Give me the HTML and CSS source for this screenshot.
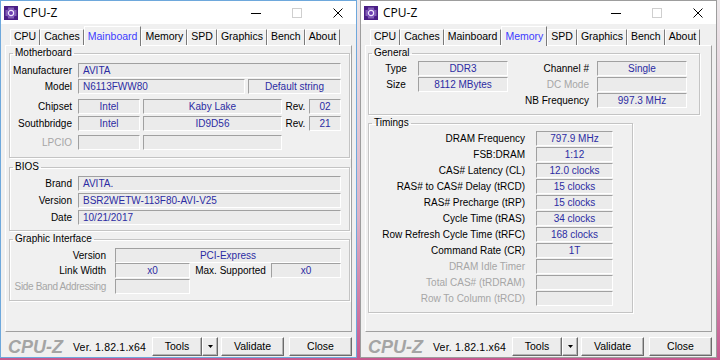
FILE: index.html
```html
<!DOCTYPE html>
<html lang="en">
<head>
  <meta charset="UTF-8" />
  <title>CPU-Z</title>
  <link rel="stylesheet" href="styles.css">
</head>
<body>
<div class="desktop">

  <!-- Mainboard window -->
  <div class="window active">
    <div class="titlebar">
      <svg class="app-icon" width="14" height="14" viewBox="0 0 14 14">
        <rect width="14" height="14" fill="#4a1e86"/>
        <rect x="3" y="3" width="8" height="8" rx="1.5" fill="#6a3bb0"/>
        <circle cx="7" cy="7" r="2.6" fill="none" stroke="#eee6fa" stroke-width="1.2"/>
        <path d="M5 1.5v2M7 1.5v2M9 1.5v2M5 10.5v2M7 10.5v2M9 10.5v2M1.5 5h2M1.5 7h2M1.5 9h2M10.5 5h2M10.5 7h2M10.5 9h2" stroke="#c9b6ec" stroke-width="0.9"/>
      </svg>
      <span class="title">CPU-Z</span>
      <div class="controls">
        <svg class="ctl" width="10" height="10" viewBox="0 0 10 10"><path d="M0 5.5h10" stroke="#000" stroke-width="1"/></svg>
        <svg class="ctl" width="10" height="10" viewBox="0 0 10 10"><rect x="0.5" y="0.5" width="9" height="9" fill="none" stroke="#cfcfcf"/></svg>
        <svg class="ctl" width="10" height="10" viewBox="0 0 10 10"><path d="M0.5 0.5l9 9M9.5 0.5l-9 9" stroke="#000" stroke-width="1"/></svg>
      </div>
    </div>

    <div class="tabs">
      <span class="tab">CPU</span>
      <span class="tab">Caches</span>
      <span class="tab current">Mainboard</span>
      <span class="tab">Memory</span>
      <span class="tab">SPD</span>
      <span class="tab">Graphics</span>
      <span class="tab">Bench</span>
      <span class="tab">About</span>
    </div>

    <div class="panel">
      <fieldset class="group motherboard">
        <legend>Motherboard</legend>
        <div class="row">
          <span class="lbl">Manufacturer</span>
          <span class="box grow">AVITA</span>
        </div>
        <div class="row">
          <span class="lbl">Model</span>
          <span class="box grow">N6113FWW80</span>
          <span class="box c extra">Default string</span>
        </div>
        <div class="row">
          <span class="lbl">Chipset</span>
          <span class="box c vendor">Intel</span>
          <span class="box c chip">Kaby Lake</span>
          <span class="rev">Rev.</span>
          <span class="box c revnum">02</span>
        </div>
        <div class="row">
          <span class="lbl">Southbridge</span>
          <span class="box c vendor">Intel</span>
          <span class="box c chip">ID9D56</span>
          <span class="rev">Rev.</span>
          <span class="box c revnum">21</span>
        </div>
        <div class="row">
          <span class="lbl dim">LPCIO</span>
          <span class="box c vendor"></span>
          <span class="box c chip"></span>
        </div>
      </fieldset>

      <fieldset class="group bios">
        <legend>BIOS</legend>
        <div class="row">
          <span class="lbl">Brand</span>
          <span class="box grow">AVITA.</span>
        </div>
        <div class="row">
          <span class="lbl">Version</span>
          <span class="box grow">BSR2WETW-113F80-AVI-V25</span>
        </div>
        <div class="row">
          <span class="lbl">Date</span>
          <span class="box grow">10/21/2017</span>
        </div>
      </fieldset>

      <fieldset class="group graphic">
        <legend>Graphic Interface</legend>
        <div class="row">
          <span class="lbl">Version</span>
          <span class="box c grow">PCI-Express</span>
        </div>
        <div class="row">
          <span class="lbl">Link Width</span>
          <span class="box c link">x0</span>
          <span class="maxlbl">Max. Supported</span>
          <span class="box c grow">x0</span>
        </div>
        <div class="row">
          <span class="lbl dim tight">Side Band Addressing</span>
          <span class="box c link"></span>
        </div>
      </fieldset>
    </div>

    <div class="footer">
      <span class="logo">CPU-Z</span>
      <span class="ver">Ver. 1.82.1.x64</span>
      <div class="buttons">
        <span class="btn tools">Tools</span>
        <span class="btn arrow"><svg width="5" height="3" viewBox="0 0 5 3"><path d="M0 0h5L2.5 3z" fill="#000"/></svg></span>
        <span class="btn validate">Validate</span>
        <span class="btn close">Close</span>
      </div>
    </div>
  </div>

  <!-- Memory window -->
  <div class="window">
    <div class="titlebar">
      <svg class="app-icon" width="14" height="14" viewBox="0 0 14 14">
        <rect width="14" height="14" fill="#4a1e86"/>
        <rect x="3" y="3" width="8" height="8" rx="1.5" fill="#6a3bb0"/>
        <circle cx="7" cy="7" r="2.6" fill="none" stroke="#eee6fa" stroke-width="1.2"/>
        <path d="M5 1.5v2M7 1.5v2M9 1.5v2M5 10.5v2M7 10.5v2M9 10.5v2M1.5 5h2M1.5 7h2M1.5 9h2M10.5 5h2M10.5 7h2M10.5 9h2" stroke="#c9b6ec" stroke-width="0.9"/>
      </svg>
      <span class="title">CPU-Z</span>
      <div class="controls">
        <svg class="ctl" width="10" height="10" viewBox="0 0 10 10"><path d="M0 5.5h10" stroke="#000" stroke-width="1"/></svg>
        <svg class="ctl" width="10" height="10" viewBox="0 0 10 10"><rect x="0.5" y="0.5" width="9" height="9" fill="none" stroke="#cfcfcf"/></svg>
        <svg class="ctl" width="10" height="10" viewBox="0 0 10 10"><path d="M0.5 0.5l9 9M9.5 0.5l-9 9" stroke="#000" stroke-width="1"/></svg>
      </div>
    </div>

    <div class="tabs">
      <span class="tab">CPU</span>
      <span class="tab">Caches</span>
      <span class="tab">Mainboard</span>
      <span class="tab current">Memory</span>
      <span class="tab">SPD</span>
      <span class="tab">Graphics</span>
      <span class="tab">Bench</span>
      <span class="tab">About</span>
    </div>

    <div class="panel">
      <fieldset class="group general">
        <legend>General</legend>
        <div class="row">
          <span class="lbl">Type</span>
          <span class="box c val">DDR3</span>
          <span class="lbl2">Channel #</span>
          <span class="box c val">Single</span>
        </div>
        <div class="row">
          <span class="lbl">Size</span>
          <span class="box c val">8112 MBytes</span>
          <span class="lbl2 dim">DC Mode</span>
          <span class="box c val"></span>
        </div>
        <div class="row">
          <span class="spacer"></span>
          <span class="lbl2">NB Frequency</span>
          <span class="box c val">997.3 MHz</span>
        </div>
      </fieldset>

      <fieldset class="group timings">
        <legend>Timings</legend>
        <div class="row"><span class="lbl">DRAM Frequency</span><span class="box c val">797.9 MHz</span></div>
        <div class="row"><span class="lbl">FSB:DRAM</span><span class="box c val">1:12</span></div>
        <div class="row"><span class="lbl">CAS# Latency (CL)</span><span class="box c val">12.0 clocks</span></div>
        <div class="row"><span class="lbl">RAS# to CAS# Delay (tRCD)</span><span class="box c val">15 clocks</span></div>
        <div class="row"><span class="lbl">RAS# Precharge (tRP)</span><span class="box c val">15 clocks</span></div>
        <div class="row"><span class="lbl">Cycle Time (tRAS)</span><span class="box c val">34 clocks</span></div>
        <div class="row"><span class="lbl">Row Refresh Cycle Time (tRFC)</span><span class="box c val">168 clocks</span></div>
        <div class="row"><span class="lbl">Command Rate (CR)</span><span class="box c val">1T</span></div>
        <div class="row"><span class="lbl dim">DRAM Idle Timer</span><span class="box c val"></span></div>
        <div class="row"><span class="lbl dim">Total CAS# (tRDRAM)</span><span class="box c val"></span></div>
        <div class="row"><span class="lbl dim">Row To Column (tRCD)</span><span class="box c val"></span></div>
      </fieldset>
    </div>

    <div class="footer">
      <span class="logo">CPU-Z</span>
      <span class="ver">Ver. 1.82.1.x64</span>
      <div class="buttons">
        <span class="btn tools">Tools</span>
        <span class="btn arrow"><svg width="5" height="3" viewBox="0 0 5 3"><path d="M0 0h5L2.5 3z" fill="#000"/></svg></span>
        <span class="btn validate">Validate</span>
        <span class="btn close">Close</span>
      </div>
    </div>
  </div>

</div>
</body>
</html>
```

FILE: styles.css
```css
:root {
  --face: #f0f0f0;
  --value: #2b2ba3;
  --active-tab: #3c3cff;
  --dim: #a6a6a6;
  --shade: #a0a0a0;
  --dark: #6b6b6b;
}

* {
  box-sizing: border-box;
}

body {
  margin: 0;
  width: 720px;
  height: 360px;
  overflow: hidden;
  font-family: "Liberation Sans", Arial, sans-serif;
  font-size: 10px;
  color: #000;
  background: linear-gradient(180deg, #ece8ea 0%, #dcb3c8 60%, #c6588f 100%);
}

.desktop {
  display: flex;
  gap: 3px;
}

/* window frame */

.window {
  width: 357px;
  height: 358px;
  border: 1px solid #9d9d9d;
  background: var(--face);
  display: flex;
  flex-direction: column;
}

.window.active {
  border-color: #6ea8dc;
}

.titlebar {
  height: 23px;
  background: #fff;
  display: flex;
  align-items: center;
}

.app-icon {
  margin: 0 5px 0 3px;
}

.title {
  font-family: "Open Sans", "Noto Sans", sans-serif;
  font-size: 12px;
}

.controls {
  margin-left: auto;
  margin-right: 13px;
  display: flex;
  align-items: center;
}

.ctl {
  margin-left: 31px;
}

/* tabs */

.tabs {
  height: 21px;
  display: flex;
  align-items: flex-end;
  padding-left: 9px;
}

.tab {
  height: 16px;
  padding: 0 3px;
  line-height: 13px;
  font-size: 10.5px;
  border: 1px solid #fff;
  border-right-color: #7a7a7a;
  border-bottom: none;
}

.tab.current {
  height: 20px;
  padding-top: 3px;
  margin-bottom: -1px;
  color: var(--active-tab);
  background: var(--face);
  position: relative;
  z-index: 1;
}

.panel {
  height: 287px;
  margin: 0 4px;
  border: 1px solid;
  border-color: #fff var(--shade) var(--shade) #fff;
}

/* group boxes */

.group {
  margin: 0 1px 0 3px;
  padding: 0 8px 0 0;
  border: 1px solid #c4c4c4;
  box-shadow: inset 1px 1px 0 #fff, 1px 1px 0 #fff;
  min-width: 0;
}

.group legend {
  margin-left: 3px;
  padding: 0 2px;
  line-height: 12px;
  font-size: 10px;
}

.row {
  display: flex;
  align-items: center;
  height: 15px;
  white-space: nowrap;
}

.lbl {
  flex: none;
  text-align: right;
  padding-right: 6px;
}

.dim {
  color: var(--dim);
}

.tight {
  letter-spacing: -0.35px;
}

.box {
  height: 15px;
  line-height: 13px;
  padding: 0 4px;
  color: var(--value);
  background: #ebebeb;
  border: 1px solid;
  border-color: var(--shade) #fff #fff var(--shade);
  overflow: hidden;
  flex: none;
}

.box.c {
  text-align: center;
}

.box.grow {
  flex: 1;
}

/* Motherboard */

.motherboard {
  margin-top: 1px;
  padding-top: 4px;
  padding-bottom: 7px;
}

.motherboard .lbl,
.bios .lbl {
  width: 68px;
}

.motherboard .row:nth-of-type(2) { margin-top: 1px; }
.motherboard .row:nth-of-type(3) { margin-top: 5px; }
.motherboard .row:nth-of-type(4) { margin-top: 2px; }
.motherboard .row:nth-of-type(5) { margin-top: 4px; }

.extra {
  width: 93px;
  margin-left: 3px;
}

.vendor {
  width: 62px;
}

.chip {
  width: 139px;
  margin-left: 3px;
}

.rev {
  flex: 1;
  text-align: center;
}

.revnum {
  width: 32px;
}

/* BIOS */

.bios {
  margin-top: 3px;
  padding-top: 3px;
  padding-bottom: 5px;
}

.bios .row + .row {
  margin-top: 2px;
}

/* Graphic interface */

.graphic {
  margin-top: 2px;
  padding-top: 3px;
  padding-bottom: 6px;
}

.graphic .lbl {
  width: 105px;
  padding-right: 9px;
}

.graphic .row:nth-of-type(3) {
  margin-top: 1px;
}

.link {
  width: 75px;
}

.maxlbl {
  width: 81px;
  text-align: center;
}

/* Memory: general */

.general {
  width: 332px;
  margin: 1px 0 0 2px;
  padding: 2px 0 6px 0;
}

.general .row + .row {
  margin-top: 1px;
}

.general .lbl {
  width: 49px;
  text-align: center;
  padding: 0 0 0 5px;
}

.general .val {
  width: 90px;
}

.lbl2 {
  width: 89px;
  text-align: right;
  padding-right: 8px;
}

.spacer {
  width: 139px;
  flex: none;
}

/* Memory: timings */

.timings {
  width: 265px;
  margin: 2px 0 0 2px;
  padding: 2px 0 6px 0;
}

.timings .row + .row {
  margin-top: 1px;
}

.timings .lbl {
  width: 167px;
  padding-right: 11px;
}

.timings .val {
  width: 77px;
}

/* bottom bar */

.footer {
  height: 25px;
  display: flex;
  align-items: center;
  padding: 4px 4px 0 7px;
}

.logo {
  flex: none;
  white-space: nowrap;
  font-size: 18px;
  line-height: 20px;
  font-weight: bold;
  font-style: italic;
  color: #a4a4a4;
}

.ver {
  margin-left: 10px;
  font-size: 10.5px;
  white-space: nowrap;
  letter-spacing: 0.2px;
}

.buttons {
  margin-left: auto;
  display: flex;
}

.btn {
  height: 19px;
  line-height: 16px;
  text-align: center;
  font-size: 10.5px;
  background: #ececec;
  border: 1px solid;
  border-color: #fff var(--dark) var(--dark) #fff;
  box-shadow: inset -1px -1px 0 #b4b4b4;
}

.tools {
  width: 50px;
}

.arrow {
  width: 16px;
  display: flex;
  align-items: center;
  justify-content: center;
}

.validate {
  width: 63px;
  margin-left: 3px;
}

.close {
  width: 63px;
  margin-left: 5px;
}
```
